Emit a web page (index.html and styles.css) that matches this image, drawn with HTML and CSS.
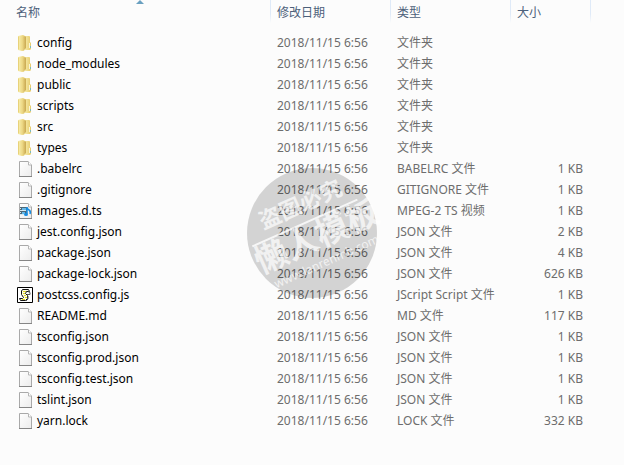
FILE: index.html
```
<!DOCTYPE html>
<html lang="zh-CN">
<head>
  <meta charset="UTF-8" />
  <meta name="viewport" content="width=device-width, initial-scale=1" />
  <title>文件列表</title>
  <link rel="stylesheet" href="styles.css">
</head>
<body>
  <svg class="sprite" aria-hidden="true">
    <defs>
      <linearGradient id="folderBack" x1="0" x2="1">
        <stop offset="0" stop-color="#f9f0b0" />
        <stop offset="1" stop-color="#e6ca6a" />
      </linearGradient>
      <linearGradient id="folderFront" x1="0" x2="1">
        <stop offset="0" stop-color="#f0dc8a" />
        <stop offset="1" stop-color="#c9a850" />
      </linearGradient>
      <linearGradient id="paper" x1="0" y1="0" x2="1" y2="1">
        <stop offset="0" stop-color="#ffffff" />
        <stop offset="1" stop-color="#ececec" />
      </linearGradient>
    </defs>
    <symbol id="folder" viewBox="0 0 16 16">
      <path d="M1 1l5-1 2 1v14l-3 1-4-1z" fill="url(#folderBack)" />
      <path d="M7 1h5q1 0 1 1v5l1 1v6l-1 1H7z" fill="url(#folderBack)" />
      <path d="M5 2l3-1 1 1v11l-3 3-1-1z" fill="url(#folderFront)" />
      <path d="M1.500 1.500v13" stroke="#e8d27a" fill="none" />
      <path d="M12 8h1v5h-1z" fill="#fbf6d8" />
      <path d="M13 11h1v2h-1z" fill="#7fb8b8" />
    </symbol>
    <symbol id="file" viewBox="0 0 16 16">
      <path d="M2.500.5h8.500l3.500 3.500v11.500h-12z" fill="url(#paper)" stroke="#a9a9a9" />
      <path d="M11.500.5v3.500h3" fill="#fff" stroke="#b5b5b5" />
      <path d="M2 15.500h13" stroke="#858585" />
    </symbol>
    <symbol id="video" viewBox="0 0 16 16">
      <use href="#file" />
      <path d="M3 4h7v8H3z" fill="#4d6878" />
      <path d="M5 5h4v2H5zM5 9h3v2H5z" fill="#66b8e8" />
      <path d="M3 5.500h1M3 7.500h6M3 9.500h1M3 11.500h5" stroke="#d8e8ef" />
      <path d="M10 4v7M10 4q0 2 2 3t1 4" stroke="#168de2" stroke-width="1.500" fill="none" />
      <ellipse cx="9" cy="11.500" rx="2" ry="1.500" fill="#168de2" />
    </symbol>
    <symbol id="script" viewBox="0 0 16 16">
      <path d="M.5.5h15v15H.5z" fill="#fff" stroke="#000" />
      <path d="M5.500 2.500h6l1 2h-3l-1 2 2 2v3l-2 2h-5l-1-2h3l1-1-2-3V4z" fill="#fffde0" stroke="#111" />
      <path d="M6 4.500h3M6 6.500h2M7 8.500h2M8 10.500h2M5 12.500h3" stroke="#e0d520" />
      <path d="M11 4.500l2 1v2h-3M11 9v3l-2 2" stroke="#555" fill="none" />
    </symbol>
  </svg>

  <table class="files">
    <colgroup>
      <col class="col-name">
      <col class="col-date">
      <col class="col-type">
      <col class="col-size">
      <col>
    </colgroup>
    <thead>
      <tr>
        <th class="sorted" aria-sort="ascending">名称</th>
        <th>修改日期</th>
        <th>类型</th>
        <th>大小</th>
        <td></td>
      </tr>
    </thead>
    <tbody id="fileList"></tbody>
  </table>

  <svg class="watermark" viewBox="0 0 130 130" aria-hidden="true">
    <circle cx="65" cy="65" r="65" />
    <g transform="rotate(-24 65 65)">
      <path d="M5 53h115" />
      <text class="wm-top" x="22" y="42">盗图必究</text>
      <text class="wm-main" x="2" y="82">懒人模板</text>
      <text class="wm-url" x="10" y="101">www.lanrenmb.com</text>
    </g>
  </svg>

  <script>
    // 图标, 名称, 类型, 大小
    const files = [
      ["folder", "config", "文件夹", ""],
      ["folder", "node_modules", "文件夹", ""],
      ["folder", "public", "文件夹", ""],
      ["folder", "scripts", "文件夹", ""],
      ["folder", "src", "文件夹", ""],
      ["folder", "types", "文件夹", ""],
      ["file", ".babelrc", "BABELRC 文件", "1 KB"],
      ["file", ".gitignore", "GITIGNORE 文件", "1 KB"],
      ["video", "images.d.ts", "MPEG-2 TS 视频", "1 KB"],
      ["file", "jest.config.json", "JSON 文件", "2 KB"],
      ["file", "package.json", "JSON 文件", "4 KB"],
      ["file", "package-lock.json", "JSON 文件", "626 KB"],
      ["script", "postcss.config.js", "JScript Script 文件", "1 KB"],
      ["file", "README.md", "MD 文件", "117 KB"],
      ["file", "tsconfig.json", "JSON 文件", "1 KB"],
      ["file", "tsconfig.prod.json", "JSON 文件", "1 KB"],
      ["file", "tsconfig.test.json", "JSON 文件", "1 KB"],
      ["file", "tslint.json", "JSON 文件", "1 KB"],
      ["file", "yarn.lock", "LOCK 文件", "332 KB"]
    ];

    document.getElementById("fileList").innerHTML = files.map(([icon, name, type, size]) => `
      <tr>
        <td><div class="name"><svg class="icon"><use href="#${icon}" /></svg><span>${name}</span></div></td>
        <td>2018/11/15 6:56</td>
        <td>${type}</td>
        <td class="size">${size}</td>
        <td></td>
      </tr>`).join("");
  </script>
</body>
</html>
```
FILE: styles.css
```
body {
  margin: 0;
  background: #fcfcfc;
  color: #6d6d6d;
  font-family: "Noto Sans", "Noto Sans CJK SC", sans-serif;
  font-size: 12px;
}

.sprite {
  position: absolute;
  width: 0;
  height: 0;
}

.files {
  width: 100%;
  table-layout: fixed;
  border-collapse: collapse;
  white-space: nowrap;
}
.col-name {
  width: 271px;
}
.col-date,
.col-type {
  width: 120px;
}
.col-size {
  width: 80px;
}

.files th {
  height: 24px;
  padding: 0 6px 8px;
  color: #4c607a;
  font-weight: normal;
  text-align: left;
  background: linear-gradient(#dfeaf8 60%, #fcfcfc) right top / 1px 23px no-repeat;
}
.files .sorted {
  position: relative;
  padding-left: 16px;
}
/* 排序箭头 */
.sorted::after {
  content: "";
  position: absolute;
  top: 0;
  left: 50%;
  border: 4px solid transparent;
  border-top: 0;
  border-bottom-color: #6aa0c0;
}

.files td {
  height: 21px;
  padding: 0 6px;
  line-height: 20px;
}
.files .size {
  padding-right: 8px;
  text-align: right;
}
.name {
  display: flex;
  align-items: center;
  gap: 4px;
  padding-left: 11px;
  color: #000;
}
.icon {
  width: 16px;
  height: 16px;
}

/* 水印 */
.watermark {
  position: absolute;
  top: 50%;
  left: 50%;
  width: 130px;
  height: 130px;
  transform: translate(-50%, -50%);
  overflow: visible;
  pointer-events: none;
}
.watermark circle {
  fill: rgba(0, 0, 0, 0.16);
}
.watermark path {
  stroke: rgba(255, 255, 255, 0.8);
  stroke-width: 2;
}
.watermark text {
  fill: rgba(255, 255, 255, 0.7);
  font-family: "Noto Sans CJK SC", sans-serif;
  font-weight: bold;
}
.watermark .wm-top {
  font-size: 22px;
}
.watermark .wm-main {
  font-size: 33px;
}
.watermark .wm-url {
  font-family: "Noto Sans", sans-serif;
  font-size: 12px;
  font-weight: normal;
}
```
